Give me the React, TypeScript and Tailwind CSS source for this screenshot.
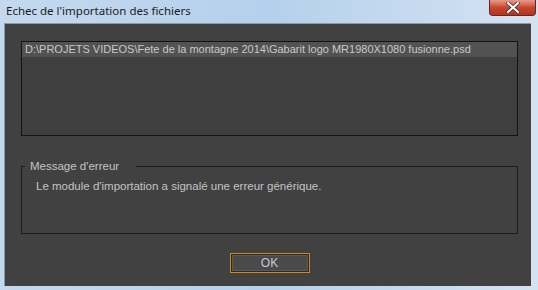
const App = () => {
  return (
    <div className="w-[538px] h-[290px] flex flex-col bg-gradient-to-r from-[#c4d9ee] via-[#b5d0ec] to-[#d4e3f2] font-['Liberation_Sans',Arial,sans-serif]">
      {/* title bar */}
      <div className="h-[23px] flex flex-row items-start justify-between shrink-0">
        <p className="pl-[6px] pt-[3px] text-[11.5px] text-[#1b1b1b] font-['Noto_Sans',sans-serif] leading-[16px]">
          Echec de l'importation des fichiers
        </p>
        <button className="w-[47px] h-[16px] mr-[2px] rounded-b-[4px] border border-t-0 border-[#5c2a23] bg-gradient-to-b from-[#e49b8b] via-[#c9452f] to-[#b8321d] flex items-center justify-center">
          <svg width="14" height="11" viewBox="0 0 14 11">
            <path d="M2 1 L12 10 M12 1 L2 10" stroke="#3b3b3b" strokeWidth="3.6" strokeLinecap="square" />
            <path d="M2 1 L12 10 M12 1 L2 10" stroke="#ffffff" strokeWidth="2" strokeLinecap="square" />
          </svg>
        </button>
      </div>

      {/* dialog body */}
      <div className="flex-1 ml-[4px] mr-[7px] mb-[4px] border-l border-t border-[#8a9aab] bg-[#414141] flex flex-col text-[11.5px] text-[#c3c3c3]">
        <div className="mt-[17px] ml-[16px] w-[497px] h-[95px] border border-[#141414] bg-[#3f3f3f]">
          <div className="h-[15px] bg-[#525252] pl-[3px] leading-[15px] text-[11px] text-[#c8c8c8] whitespace-nowrap">
            D:\PROJETS VIDEOS\Fete de la montagne 2014\Gabarit logo MR1980X1080 fusionne.psd
          </div>
        </div>

        <fieldset className="mt-[23px] ml-[16px] w-[497px] h-[75px] border border-[#1c1c1c]">
          <legend className="ml-[3px] pl-[5px] pr-[17px] leading-[14px] text-[#c3c3c3]">Message d'erreur</legend>
          <p className="mt-[6px] pl-[14px] leading-[14px]">Le module d'importation a signalé une erreur générique.</p>
        </fieldset>

        <div className="flex flex-row justify-center mt-[19px] pl-[3px]">
          <button className="w-[80px] h-[20px] border border-[#d08a12] bg-[#2a2a2a] p-[1px]">
            <div className="w-full h-full bg-[#4a4a4a] border border-[#5a5a5a] flex items-center justify-center text-[12px] text-[#c8c8c8] leading-none">
              OK
            </div>
          </button>
        </div>
      </div>
    </div>
  )
}

export default App;
